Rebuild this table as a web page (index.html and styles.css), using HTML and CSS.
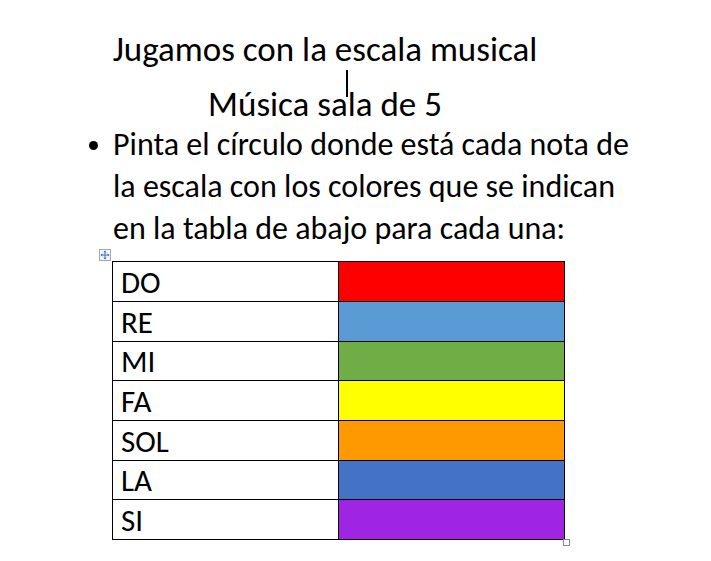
FILE: index.html
```html
<!DOCTYPE html>
<html lang="es">
<head>
<meta charset="utf-8">
<title>Jugamos con la escala musical</title>
<link rel="stylesheet" href="styles.css">
</head>
<body>
<div class="page">
  <div class="title">
    <div class="title-line t1">Jugamos con la escala musical</div>
    <div class="title-line t2">Música sala de 5</div>
    <span class="caret"></span>
  </div>
  <div class="bullet-row">
    <span class="bullet"></span>
    <p class="bullet-text">Pinta el círculo donde está cada nota de<br>la escala con los colores que se indican<br>en la tabla de abajo para cada una:</p>
  </div>
  <div class="table-wrap">
    <span class="move-handle">
      <svg width="12" height="12" viewBox="0 0 12 12">
        <rect x="0.5" y="0.5" width="11" height="11" fill="#f4f6fa" stroke="#a8a8a8"/>
        <path d="M6 2v8M2 6h8" stroke="#3a6fd0" stroke-width="1"/>
        <path d="M6 1.5l-1.6 1.8h3.2zM6 10.5l-1.6-1.8h3.2zM1.5 6l1.8-1.6v3.2zM10.5 6l-1.8-1.6v3.2z" fill="#3a6fd0"/>
      </svg>
    </span>
    <table class="notes">
      <tr><td class="name">DO</td><td class="swatch red"></td></tr>
      <tr><td class="name">RE</td><td class="swatch lightblue"></td></tr>
      <tr class="short"><td class="name">MI</td><td class="swatch green"></td></tr>
      <tr><td class="name">FA</td><td class="swatch yellow"></td></tr>
      <tr><td class="name">SOL</td><td class="swatch orange"></td></tr>
      <tr class="short"><td class="name">LA</td><td class="swatch blue"></td></tr>
      <tr><td class="name">SI</td><td class="swatch purple"></td></tr>
    </table>
    <span class="resize-handle"></span>
  </div>
</div>
</body>
</html>
```
FILE: styles.css
```css
html, body {
  margin: 0;
  padding: 0;
  background: #ffffff;
}
body {
  font-family: Carlito, Calibri, Lato, "Liberation Sans", sans-serif;
  color: #000000;
  width: 711px;
  height: 561px;
  overflow: hidden;
}
.page {
  padding-top: 24px;
  padding-left: 112px;
}
.title {
  position: relative;
  width: 426px;
  text-align: center;
  font-size: 35px;
}
.t1 {
  line-height: 50px;
  height: 50px;
}
.t2 {
  margin-top: 10px;
  line-height: 40px;
  height: 40px;
}
.caret {
  position: absolute;
  left: 234px;
  top: 46px;
  width: 2px;
  height: 27px;
  background: #000;
}
.bullet-row {
  display: flex;
  align-items: flex-start;
  margin-left: -24px;
}
.bullet {
  width: 9px;
  height: 9px;
  border-radius: 50%;
  background: #000;
  margin-top: 17px;
  margin-left: 1px;
  margin-right: 15px;
  flex: none;
}
.bullet-text {
  margin: 0;
  font-size: 32px;
  line-height: 42px;
}
.table-wrap {
  position: relative;
  margin-top: 11px;
  width: 452px;
}
.notes {
  border-collapse: collapse;
  width: 452px;
  table-layout: fixed;
}
.notes td {
  border: 1px solid #000;
  height: 39px;
  padding: 0;
}
.notes .short td {
  height: 38px;
}
.name {
  width: 217px;
  font-size: 31px;
  padding-left: 8px !important;
  line-height: 38px;
}
.swatch { width: 225px; }
.red { background: #ff0000; }
.lightblue { background: #5b9bd5; }
.green { background: #70ad47; }
.yellow { background: #ffff00; }
.orange { background: #ff9900; }
.blue { background: #4472c4; }
.purple { background: #a024e4; }
.move-handle {
  position: absolute;
  left: -13px;
  top: -12px;
  width: 12px;
  height: 12px;
  display: block;
}
.move-handle svg { display: block; }
.resize-handle {
  position: absolute;
  right: -6px;
  bottom: -6px;
  width: 5px;
  height: 5px;
  border: 1px solid #8a8a8a;
  background: #fff;
}
```
